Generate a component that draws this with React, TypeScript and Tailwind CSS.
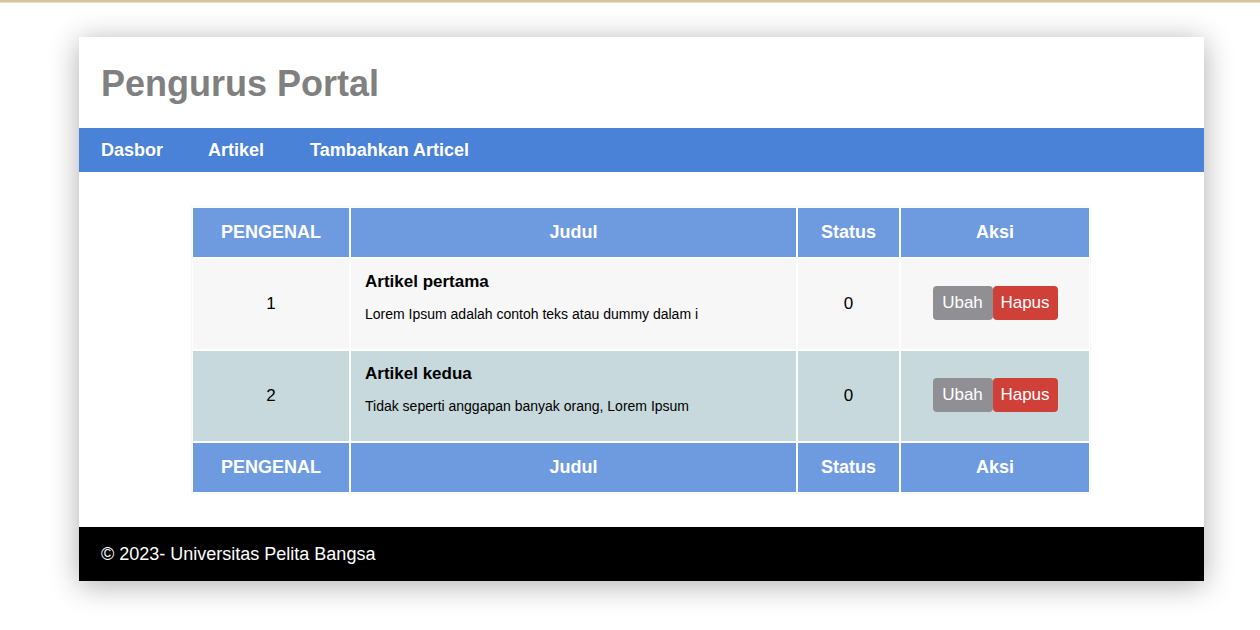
import React from "react";

const rows = [
  { id: 1, title: "Artikel pertama", desc: "Lorem Ipsum adalah contoh teks atau dummy dalam i", status: 0, bg: "bg-[#f7f7f7]" },
  { id: 2, title: "Artikel kedua", desc: "Tidak seperti anggapan banyak orang, Lorem Ipsum", status: 0, bg: "bg-[#c7d9dc]" },
];

function HeadRow() {
  return (
    <div className="flex h-[51px] text-[18px] font-bold text-white">
      <div className="w-[158px] border border-white bg-[#6e9be0] flex items-center justify-center">PENGENAL</div>
      <div className="w-[447px] border border-white bg-[#6e9be0] flex items-center justify-center">Judul</div>
      <div className="w-[103px] border border-white bg-[#6e9be0] flex items-center justify-center">Status</div>
      <div className="w-[190px] border border-white bg-[#6e9be0] flex items-center justify-center">Aksi</div>
    </div>
  );
}

export default function App() {
  return (
    <div className="min-h-[630px] bg-white" style={{ fontFamily: '"Liberation Sans", Arial, sans-serif' }}>
      <div className="h-[2px] bg-[#d5c59c]" />
      <div className="h-px bg-[#e9e0c6]" />
      <div className="ml-[79px] mt-[34px] w-[1125px] bg-white shadow-[0_4px_28px_rgba(0,0,0,0.32)]">
        <div className="h-[91px] flex items-center pl-[22px]">
          <h1 className="text-[36px] font-bold text-[#808080] leading-none pt-[3px]">Pengurus Portal</h1>
        </div>
        <nav className="h-[44px] bg-[#4a82d8] flex items-center text-[18px] font-bold text-white">
          <span className="px-[22px]">Dasbor</span>
          <span className="px-[23px]">Artikel</span>
          <span className="px-[23px]">Tambahkan Articel</span>
        </nav>
        <main className="pt-[34px] pb-[33px]">
          <div className="ml-[112px] w-[900px] bg-[#f7f7f7] p-px text-black">
            <HeadRow />
            {rows.map((r) => (
              <div key={r.id} className="flex h-[92px]">
                <div className={`w-[158px] border border-white ${r.bg} flex items-center justify-center text-[17px]`}>{r.id}</div>
                <div className={`w-[447px] border border-white ${r.bg} pl-[14px] pt-[13px]`}>
                  <div className="text-[17px] font-bold leading-[20px]">{r.title}</div>
                  <div className="text-[14px] leading-[16px] mt-[14px]">{r.desc}</div>
                </div>
                <div className={`w-[103px] border border-white ${r.bg} flex items-center justify-center text-[17px]`}>{r.status}</div>
                <div className={`w-[190px] border border-white ${r.bg} flex items-center justify-center pb-[2px]`}>
                  <button className="w-[60px] h-[34px] rounded-[4px] bg-[#909094] text-white text-[17px]">Ubah</button>
                  <button className="w-[65px] h-[34px] rounded-[4px] bg-[#cf4039] text-white text-[17px]">Hapus</button>
                </div>
              </div>
            ))}
            <HeadRow />
          </div>
        </main>
        <footer className="h-[54px] bg-black flex items-center pl-[22px] text-[18px] text-white">
          © 2023- Universitas Pelita Bangsa
        </footer>
      </div>
    </div>
  );
}
